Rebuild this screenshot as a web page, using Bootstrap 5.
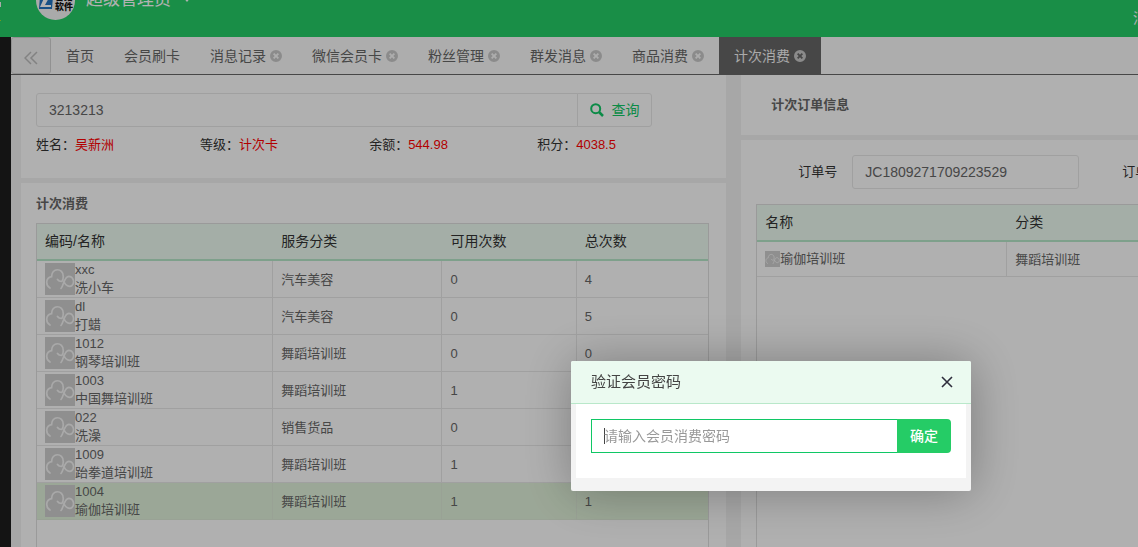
<!DOCTYPE html>
<html lang="zh-CN">
<head>
<meta charset="utf-8">
<meta name="viewport" content="width=device-width, initial-scale=1">
<title>计次消费</title>
<link href="https://cdn.jsdelivr.net/npm/bootstrap@5.3.0/dist/css/bootstrap.min.css" rel="stylesheet">
<style>
  :root { --brand: #25cc66; --line: #ddd; --cell: #e6e6e6; --page: #f0f0f0; --panel: #fcfcfc; --ink: #666; }
  body { font-family: "Liberation Sans", "Noto Sans CJK SC", sans-serif; font-size: 13px; line-height: 18px; color: #333; background: var(--page); height: 100vh; overflow: hidden; }
  .topbar { height: 60px; margin-top: -23px; background: var(--brand); color: #fff; }
  .topbar .edge { width: 11px; }
  .brand-logo { width: 39px; height: 39px; margin-left: 25px; margin-top: 4px; }
  .user-toggle { font-size: 17px; line-height: 24px; color: #fff; margin-left: 11px; margin-top: 11px; }
  .user-toggle svg { margin-left: 11px; }
  .top-link { color: #fff; font-size: 14px; line-height: 20px; margin: 31px -9px 0 auto; white-space: nowrap; }
  .side { width: 11px; background: #1e1e1e; }
  .tabs { height: 38px; background: #f8f8f8; border-bottom: 1px solid #666; }
  .fold { width: 40px; background: #f0f0f0; border: 1px solid #d0d0d0; border-radius: 3px; color: #bbb; padding: 4px 0 0; }
  .tab { display: flex; align-items: center; gap: 4px; padding: 0 15px; font-size: 14px; color: var(--ink); text-decoration: none; white-space: nowrap; }
  .tab svg { color: #c8c8c8; }
  .tab.active { background: #666; color: #f4f4f4; }
  .board { display: grid; grid-template-columns: minmax(0, 16fr) minmax(0, 9fr); column-gap: 15px; padding-left: 10px; }
  .pane { background: var(--panel); overflow: hidden; }
  .member { height: 103px; padding: 18px 15px 0; }
  .records { margin-top: 5px; padding: 12px 17px 0 15px; }
  .records .grid-box { margin-top: 10px; }
  .search { width: 616px; max-width: 100%; height: 34px; }
  .field { font-size: 14px; line-height: 20px; color: var(--ink); background: transparent; border: 1px solid var(--cell); padding: 6px 12px; border-radius: 3px; height: 34px; min-height: 34px; }
  .search .btn { width: 75px; border: 1px solid var(--cell); font-size: 14px; line-height: 20px; color: #10c765; border-radius: 3px; padding: 0; }
  /* The Traditional face centres the full-width colon */
  .facts { display: grid; grid-template-columns: 164fr 169fr 168fr 174fr; margin: 8px 0 0; font-family: "Noto Sans CJK TC", sans-serif; }
  .facts b { font-family: "Liberation Sans", "Noto Sans CJK SC", sans-serif; font-weight: 400; color: #f00; }
  .heading { font-size: 13px; line-height: 18px; font-weight: 700; color: var(--ink); margin: 0; }
  .grid-box { border: 1px solid var(--line); border-bottom: 0; overflow: hidden; }
  .data { width: 100%; table-layout: fixed; border-collapse: separate; border-spacing: 0; }
  .data th { height: 37px; padding: 0 8px 2px; font-size: 14px; line-height: 20px; font-weight: 400; background: #ebfaf0; border-bottom: 2px solid #b5e5c8; }
  .data td { height: 37px; padding: 0 8px; color: var(--ink); border-right: 1px solid var(--cell); border-bottom: 1px solid var(--cell); white-space: nowrap; vertical-align: middle; }
  .data td + td { padding-top: 2px; }
  .data td:last-child { border-right: 0; }
  .data .picked td { background: #dff0d8; border-color: #dce8d6; }
  .w-name { width: 35.2%; } .w-kind { width: 25.2%; } .w-left { width: 20%; }
  .thumb { flex: none; width: 30px; height: 32px; background: #cdcdcd; }
  .thumb.tiny { width: 15px; height: 16px; }
  .order-head { height: 60px; padding: 21px 30px; margin-bottom: 5px; }
  .order-body { padding: 15px 0 0 15px; }
  .order-form { min-width: 700px; padding-left: 42px; margin-bottom: 15px; }
  .order-form .field { width: 227px; margin: 0 43px 0 15px; }
  .orders { width: 700px; }
  .orders td { height: 35px; }
  .w-item { width: 250px; }
  .shade { position: fixed; inset: 0; z-index: 10; background: rgba(0, 0, 0, .3); }
  .dialog { position: fixed; z-index: 11; left: 571px; top: 361px; width: 400px; background: #f3f3f3; border-radius: 2px; box-shadow: 1px 1px 50px rgba(0, 0, 0, .3); padding-bottom: 13px; }
  .dialog header { height: 43px; padding: 0 16px 0 20px; background: #ebfaf0; border-bottom: 1px solid #b9e8ca; border-radius: 2px 2px 0 0; }
  .dialog h2 { font-size: 15px; line-height: 20px; font-weight: 400; color: #444; margin: 0; }
  .dialog form { background: #fff; margin: 0 5px; padding: 15px 15px 25px; }
  .dialog .pass { background: #fff linear-gradient(#444, #444) 12px 8px / 1px 16px no-repeat; border-color: #10c765; border-radius: 0; box-shadow: none; }
  .dialog .pass::placeholder { color: #999; }
  .dialog .ok { width: 54px; padding: 0; font-size: 14px; font-weight: 500; line-height: 20px; color: #fff; background: var(--brand); border: 0; border-radius: 0 4px 4px 0; }
</style>
<script src="https://cdn.jsdelivr.net/npm/bootstrap@5.3.0/dist/js/bootstrap.bundle.min.js"></script>
</head>
<body class="d-flex flex-column">

<svg class="d-none" aria-hidden="true">
  <symbol id="i-close" viewBox="0 0 12 12"><path fill="currentColor" fill-rule="evenodd" d="M6 0a6 6 0 1 0 0 12A6 6 0 0 0 6 0M4.3 3 6 4.7 7.7 3 9 4.3 7.3 6 9 7.7 7.7 9 6 7.3 4.3 9 3 7.7 4.7 6 3 4.3z"/></symbol>
  <symbol id="i-cloud" viewBox="0 0 30 32"><path fill="none" stroke="#f2f2f2" stroke-width="1.7" stroke-linecap="round" d="M5 25C.6 22.500.2 15 6.600 13.700C6.400 4.500 18.300 4.500 18.300 13.500C18.300 16 17.800 17.500 16.800 18.500C15 18.500 13.300 17.800 12.500 16.500M16 25.500C18.500 23 19 13.500 23.800 13.300C28.300 13.300 30 19.500 27 22.500C24.300 24.500 20.500 22.500 18.800 18.500"/></symbol>
</svg>

<header class="topbar d-flex align-items-start flex-shrink-0">
  <svg class="edge flex-shrink-0" height="60" viewBox="0 0 11 60" aria-hidden="true"><path fill="#f4f4f4" d="M0 25h1v5H0z"/><path fill="#9bdc32" d="M0 43h1v1H0z"/></svg>
  <svg class="brand-logo flex-shrink-0" viewBox="0 0 39 39" role="img" aria-label="软件">
    <circle cx="19.500" cy="19.500" r="19.500" fill="#f4f4f4"/>
    <path fill="#2273c0" d="M4 15h13l-1 13H3z"/><path fill="#fff" d="M9 15h5l-5 9h6v2H4z"/>
    <g font-family="Noto Sans CJK SC, sans-serif" font-size="9" font-weight="900" fill="#111"><text x="19" y="19">智络</text><text x="19" y="29">软件</text></g>
  </svg>
  <a class="user-toggle text-decoration-none" href="#">超级管理员<svg width="10" height="8" viewBox="0 0 10 8" aria-hidden="true"><path fill="#fff" d="M1 0h8L5 5z"/></svg></a>
  <a class="top-link text-decoration-none" href="#">消</a>
</header>

<div class="d-flex flex-grow-1">
  <aside class="side flex-shrink-0"></aside>
  <main class="d-flex flex-column flex-grow-1 overflow-hidden">
    <nav class="tabs d-flex flex-shrink-0" aria-label="标签页">
      <button class="fold" type="button" aria-label="收起"><svg width="14" height="16" viewBox="0 0 14 16" fill="none" stroke="currentColor" stroke-width="1.500"><path d="m7 2-6 6 6 6M13 2 7 8l6 6"/></svg></button>
      <a class="tab" href="#">首页</a>
      <a class="tab" href="#">会员刷卡</a>
      <a class="tab" href="#">消息记录<svg width="12" height="12"><use href="#i-close"/></svg></a>
      <a class="tab" href="#">微信会员卡<svg width="12" height="12"><use href="#i-close"/></svg></a>
      <a class="tab" href="#">粉丝管理<svg width="12" height="12"><use href="#i-close"/></svg></a>
      <a class="tab" href="#">群发消息<svg width="12" height="12"><use href="#i-close"/></svg></a>
      <a class="tab" href="#">商品消费<svg width="12" height="12"><use href="#i-close"/></svg></a>
      <a class="tab active" href="#" aria-current="page">计次消费<svg width="12" height="12"><use href="#i-close"/></svg></a>
    </nav>

    <div class="board flex-grow-1">
      <div class="d-flex flex-column">
        <section class="pane member">
          <div class="input-group search flex-nowrap">
            <input class="form-control field" type="text" value="3213213" aria-label="会员卡号">
            <button class="btn d-flex align-items-center justify-content-center gap-2" type="button"><svg width="14" height="14" viewBox="0 0 14 14" fill="none" stroke="currentColor" stroke-width="2" aria-hidden="true"><circle cx="5.700" cy="5.700" r="4.500"/><path d="m9 9 4 4" stroke-width="2.500"/></svg>查询</button>
          </div>
          <div class="facts">
            <span>姓名：<b>吴新洲</b></span><span>等级：<b>计次卡</b></span><span>余额：<b>544.98</b></span><span>积分：<b>4038.5</b></span>
          </div>
        </section>
        <section class="pane records flex-grow-1 d-flex flex-column">
          <h2 class="heading">计次消费</h2>
          <div class="grid-box flex-grow-1">
            <table class="data">
              <thead><tr><th class="w-name">编码/名称</th><th class="w-kind">服务分类</th><th class="w-left">可用次数</th><th>总次数</th></tr></thead>
              <tbody>
                <tr><td><div class="d-flex align-items-center"><svg class="thumb"><use href="#i-cloud"/></svg><span>xxc<br>洗小车</span></div></td><td>汽车美容</td><td>0</td><td>4</td></tr>
                <tr><td><div class="d-flex align-items-center"><svg class="thumb"><use href="#i-cloud"/></svg><span>dl<br>打蜡</span></div></td><td>汽车美容</td><td>0</td><td>5</td></tr>
                <tr><td><div class="d-flex align-items-center"><svg class="thumb"><use href="#i-cloud"/></svg><span>1012<br>钢琴培训班</span></div></td><td>舞蹈培训班</td><td>0</td><td>0</td></tr>
                <tr><td><div class="d-flex align-items-center"><svg class="thumb"><use href="#i-cloud"/></svg><span>1003<br>中国舞培训班</span></div></td><td>舞蹈培训班</td><td>1</td><td></td></tr>
                <tr><td><div class="d-flex align-items-center"><svg class="thumb"><use href="#i-cloud"/></svg><span>022<br>洗澡</span></div></td><td>销售货品</td><td>0</td><td></td></tr>
                <tr><td><div class="d-flex align-items-center"><svg class="thumb"><use href="#i-cloud"/></svg><span>1009<br>跆拳道培训班</span></div></td><td>舞蹈培训班</td><td>1</td><td></td></tr>
                <tr class="picked"><td><div class="d-flex align-items-center"><svg class="thumb"><use href="#i-cloud"/></svg><span>1004<br>瑜伽培训班</span></div></td><td>舞蹈培训班</td><td>1</td><td>1</td></tr>
              </tbody>
            </table>
          </div>
        </section>
      </div>

      <div class="d-flex flex-column">
        <section class="pane order-head"><h2 class="heading">计次订单信息</h2></section>
        <section class="pane order-body flex-grow-1 d-flex flex-column">
          <div class="order-form d-flex align-items-center">
            <label for="orderNo">订单号</label>
            <input class="field" id="orderNo" type="text" value="JC1809271709223529">
            <span>订单</span>
          </div>
          <div class="grid-box orders flex-grow-1">
            <table class="data">
              <thead><tr><th class="w-item">名称</th><th>分类</th></tr></thead>
              <tbody><tr><td><div class="d-flex align-items-center"><svg class="thumb tiny"><use href="#i-cloud"/></svg>瑜伽培训班</div></td><td>舞蹈培训班</td></tr></tbody>
            </table>
          </div>
        </section>
      </div>
    </div>
  </main>
</div>

<div class="shade"></div>
<div class="dialog" role="dialog" aria-labelledby="dlgTitle">
  <header class="d-flex align-items-center justify-content-between">
    <h2 id="dlgTitle">验证会员密码</h2>
    <button class="btn p-0 border-0 d-flex" type="button" aria-label="关闭"><svg width="16" height="16" viewBox="0 0 16 16" fill="none" stroke="#2e2d3c" stroke-width="1.600"><path d="m3 3 10 10M13 3 3 13"/></svg></button>
  </header>
  <form>
    <div class="input-group flex-nowrap">
      <input class="form-control field pass" type="text" placeholder="请输入会员消费密码" aria-label="会员消费密码">
      <button class="btn ok" type="button">确定</button>
    </div>
  </form>
</div>
</body>
</html>
